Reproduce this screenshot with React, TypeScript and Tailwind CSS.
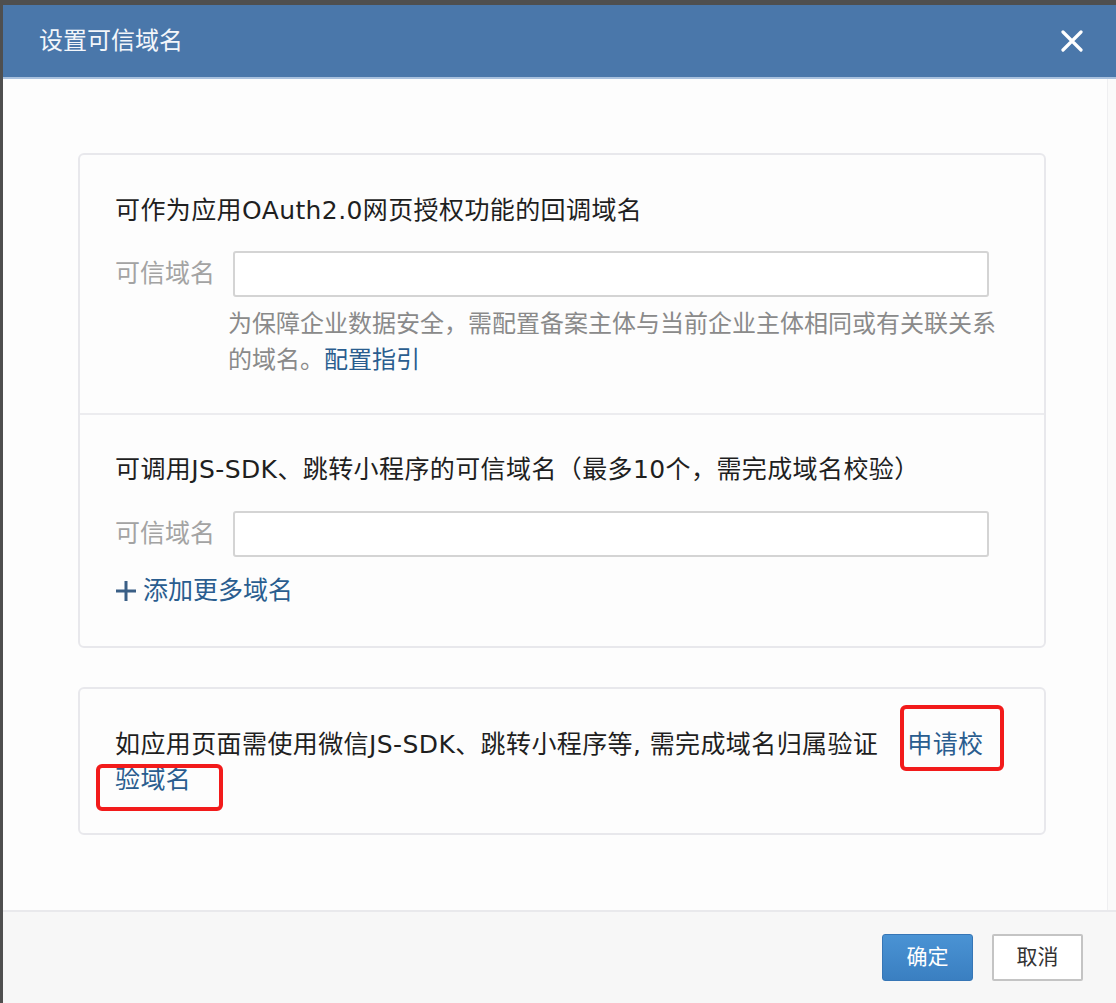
import React from "react";

const font = "font-['DejaVu_Sans','Noto_Sans_CJK_SC','Microsoft_YaHei',sans-serif]";

function RedMark({ className }: { className: string }) {
  return (
    <span
      className={`pointer-events-none absolute rounded-[6px] border-[4px] border-[#f21b1b] ${className}`}
    />
  );
}

function DomainInput() {
  return (
    <div className="flex items-center">
      <span className="w-[118px] shrink-0 text-[25px] text-[#a3a3a3]">可信域名</span>
      <input
        type="text"
        className="h-[46px] w-[756px] rounded-[3px] border-2 border-[#d4d4d4] bg-white px-3 outline-none"
      />
    </div>
  );
}

export default function App() {
  return (
    <div className={`flex h-[1003px] w-[1116px] flex-col bg-[#4f4f4f] pl-[3px] pt-[5px] ${font}`}>
      <div className="flex flex-1 flex-col bg-[#fdfdfd]">
        {/* header */}
        <div className="flex h-[74px] items-center justify-between border-b-2 border-[#a9c1de] bg-[#4a77aa] pl-[36px] pr-[33px]">
          <h1 className="text-[24px] leading-none text-[#f3f6fa]">设置可信域名</h1>
          <button className="text-white" aria-label="关闭">
            <svg width="22" height="22" viewBox="0 0 22 22" fill="none" stroke="currentColor" strokeWidth="3.2" strokeLinecap="round">
              <path d="M2 2l18 18M20 2L2 20" />
            </svg>
          </button>
        </div>

        {/* body */}
        <div className="flex flex-1">
          <div className="flex flex-1 flex-col gap-[39px] pl-[75px] pt-[74px]">
            <div className="w-[968px] rounded-[6px] border-2 border-[#e8e8ec] bg-[#fdfdfd] text-[25px] leading-[36px]">
              <div className="pb-[35px] pl-[35px] pr-[36px] pt-[38px]">
                <p className="tracking-[0.4px] text-[#1f1f1f]">可作为应用OAuth2.0网页授权功能的回调域名</p>
                <div className="mt-[22px]">
                  <DomainInput />
                </div>
                <p className="ml-[113px] mt-[9px] whitespace-nowrap text-[24px] text-[#8a8a8a]">
                  <span className="block">为保障企业数据安全，需配置备案主体与当前企业主体相同或有关联关系</span>
                  的域名。<a className="text-[#2a5d8f]" href="#">配置指引</a>
                </p>
              </div>
              <div className="border-t-2 border-[#ececef] pb-[37px] pl-[35px] pr-[36px] pt-[37px]">
                <p className="tracking-[0.4px] text-[#1f1f1f]">可调用JS-SDK、跳转小程序的可信域名（最多10个，需完成域名校验）</p>
                <div className="mt-[23px]">
                  <DomainInput />
                </div>
                <button className="mt-[16px] flex items-center gap-[6px] text-[25px] leading-[36px] text-[#2a5d8f]">
                  <svg width="22" height="22" viewBox="0 0 22 22" fill="none" stroke="#3a5f86" strokeWidth="3">
                    <path d="M11 1v20M1 11h20" />
                  </svg>
                  添加更多域名
                </button>
              </div>
            </div>

            <div className="w-[968px] rounded-[6px] border-2 border-[#e8e8ec] bg-[#fdfdfd] pb-[36px] pl-[35px] pr-[36px] pt-[38px] text-[25px] leading-[35px] text-[#1f1f1f]">
              <p className="whitespace-nowrap tracking-[0.4px]">
                如应用页面需使用微信JS-SDK、跳转小程序等, 需完成域名归属验证
                <span className="relative ml-[29px] text-[#2a5d8f]">
                  申请校
                  <RedMark className="-bottom-[12px] -left-[7px] -right-[21px] -top-[25px]" />
                </span>
                <br />
                <span className="relative text-[#2a5d8f]">
                  验域名
                  <RedMark className="-bottom-[17px] -left-[19px] -right-[32px] -top-[1px]" />
                </span>
              </p>
            </div>
          </div>
          <div className="w-[9px] border-l border-[#efeff1] bg-[#fafafa]" />
        </div>

        {/* footer */}
        <div className="flex h-[93px] items-start justify-end gap-[19px] border-t-2 border-[#e9e9ec] bg-[#f7f7f7] pr-[33px] pt-[22px]">
          <button className="h-[47px] w-[91px] rounded-[3px] border border-[#3676b6] bg-gradient-to-b from-[#4a93d4] to-[#3a7fc1] text-[21px] text-white">
            确定
          </button>
          <button className="h-[47px] w-[91px] rounded-[2px] border-2 border-[#c4c4c4] bg-white text-[21px] text-[#333]">
            取消
          </button>
        </div>
      </div>
    </div>
  );
}
